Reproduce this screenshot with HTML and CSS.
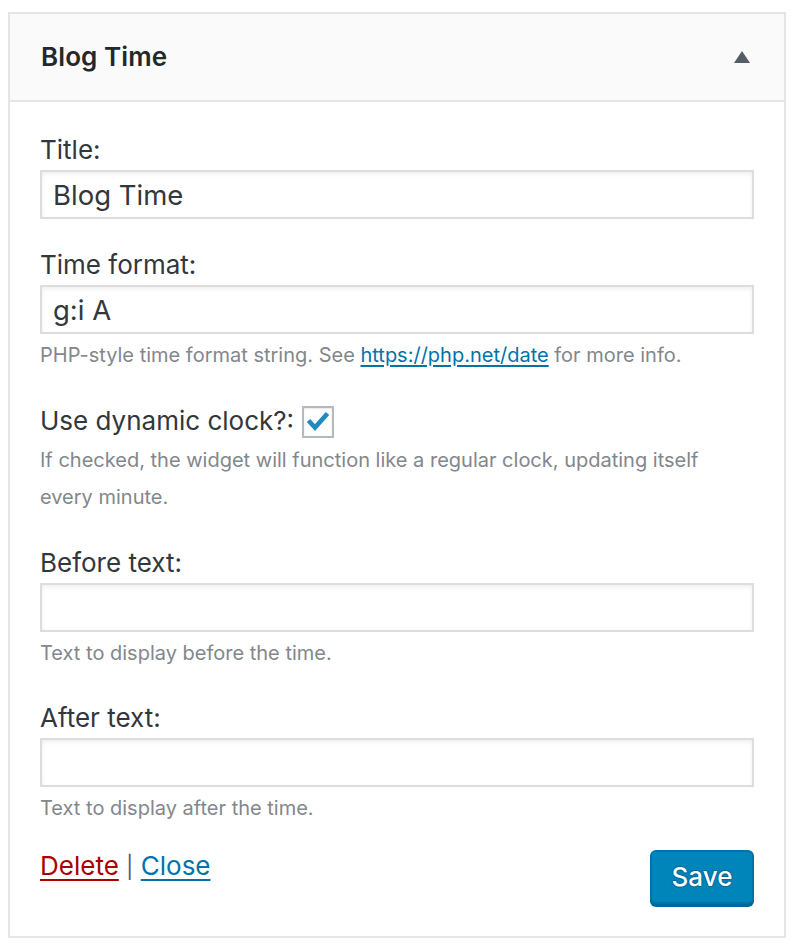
FILE: index.html
```html
<!DOCTYPE html>
<html lang="en">
<head>
<meta charset="utf-8">
<title>Blog Time widget</title>
<link rel="stylesheet" href="styles.css">
</head>
<body>
<div class="widget">
  <div class="widget-top">
    <h3 class="widget-title">Blog Time</h3>
    <span class="toggle" aria-hidden="true"></span>
  </div>
  <form class="widget-inside">
    <div class="field">
      <label class="label" for="title">Title:</label>
      <input class="text-input" id="title" type="text" value="Blog Time">
    </div>
    <div class="field">
      <label class="label" for="fmt">Time format:</label>
      <input class="text-input" id="fmt" type="text" value="g:i A">
      <p class="help">PHP-style time format string. See <a class="help-link" href="#">https://php.net/date</a> for more info.</p>
    </div>
    <div class="field">
      <div class="check-row">
        <label class="label" for="dyn">Use dynamic clock?:</label>
        <span class="checkbox" id="dyn" role="checkbox" aria-checked="true">
          <svg width="24" height="20" viewBox="0 0 24 20"><path d="M2.5 9.5 L9 16.5 L21.5 2.5" fill="none" stroke="#1e8cbe" stroke-width="4.6" stroke-linejoin="miter" stroke-linecap="butt"/></svg>
        </span>
      </div>
      <p class="help">If checked, the widget will function like a regular clock, updating itself every minute.</p>
    </div>
    <div class="field">
      <label class="label" for="before">Before text:</label>
      <input class="text-input" id="before" type="text" value="">
      <p class="help">Text to display before the time.</p>
    </div>
    <div class="field">
      <label class="label" for="after">After text:</label>
      <input class="text-input" id="after" type="text" value="">
      <p class="help">Text to display after the time.</p>
    </div>
    <div class="actions">
      <div class="links"><a class="delete" href="#">Delete</a> <span class="sep">|</span> <a class="close" href="#">Close</a></div>
      <button class="save" type="button">Save</button>
    </div>
  </form>
</div>
</body>
</html>
```
FILE: styles.css
```css
* { box-sizing: border-box; }

body {
  margin: 0;
  background: #ffffff;
  font-family: Inter, "Open Sans", "Liberation Sans", sans-serif;
  color: #32373c;
}

.widget {
  margin: 12px 0 0 8px;
  width: 778px;
  border: 2px solid #e5e5e5;
  background: #ffffff;
}

.widget-top {
  height: 88px;
  background: #fafafa;
  border-bottom: 2px solid #e5e5e5;
  display: flex;
  align-items: center;
  justify-content: space-between;
  padding: 0 34px 2px 31px;
}

.widget-title {
  margin: 0;
  font-size: 26px;
  font-weight: 600;
  color: #23282d;
  letter-spacing: 0.1px;
}

.toggle {
  width: 0;
  height: 0;
  border-left: 8px solid transparent;
  border-right: 8px solid transparent;
  border-bottom: 12px solid #555d66;
  margin-top: 2px;
}

.widget-inside {
  display: flex;
  flex-direction: column;
  padding: 30px 30px 29px;
}

.field {
  display: flex;
  flex-direction: column;
  margin-bottom: 28px;
}

.label {
  display: block;
  font-size: 26px;
  line-height: 36px;
  color: #32373c;
}

.text-input {
  display: block;
  width: 100%;
  height: 49px;
  margin: 2px 0 0;
  padding: 0 11px;
  border: 2px solid #dddddd;
  border-radius: 0;
  box-shadow: inset 0 2px 4px rgba(0, 0, 0, 0.07);
  background: #ffffff;
  font-family: inherit;
  font-size: 27.5px;
  color: #32373c;
  outline: none;
}

.help {
  margin: 3px 0 0;
  font-size: 20px;
  line-height: 37.5px;
  color: #82878c;
}

.help-link {
  color: #0073aa;
  text-decoration: underline;
  text-decoration-thickness: 2px;
  text-underline-offset: 3px;
}

.check-row {
  display: flex;
  align-items: center;
  gap: 8px;
}

.checkbox {
  width: 32px;
  height: 32px;
  border: 2px solid #b4b9be;
  background: #ffffff;
  box-shadow: inset 0 1px 2px rgba(0, 0, 0, 0.1);
  display: flex;
  align-items: center;
  justify-content: center;
  margin-top: 3px;
}

.checkbox svg {
  display: block;
  margin-top: -2px;
}

.actions {
  display: flex;
  justify-content: space-between;
  align-items: flex-start;
  margin-top: -6px;
}

.links {
  font-size: 26px;
  line-height: 36px;
  color: #32373c;
  margin-top: -2px;
}

.sep {
  font-size: 22px;
  color: #555d66;
}

.delete {
  color: #aa0000;
  text-decoration: underline;
  text-decoration-thickness: 2px;
  text-underline-offset: 4px;
}

.close {
  color: #0073aa;
  text-decoration: underline;
  text-decoration-thickness: 2px;
  text-underline-offset: 4px;
}

.save {
  width: 104px;
  height: 54px;
  margin-bottom: 3px;
  border: 2px solid #0073aa;
  border-radius: 6px;
  background: #0085ba;
  box-shadow: 0 3px 0 #006799;
  color: #ffffff;
  font-family: inherit;
  font-size: 26px;
  font-weight: 500;
  text-shadow: 0 -1px 1px #006799, 1px 0 1px #006799, 0 1px 1px #006799, -1px 0 1px #006799;
  padding: 0;
  cursor: pointer;
}
```
